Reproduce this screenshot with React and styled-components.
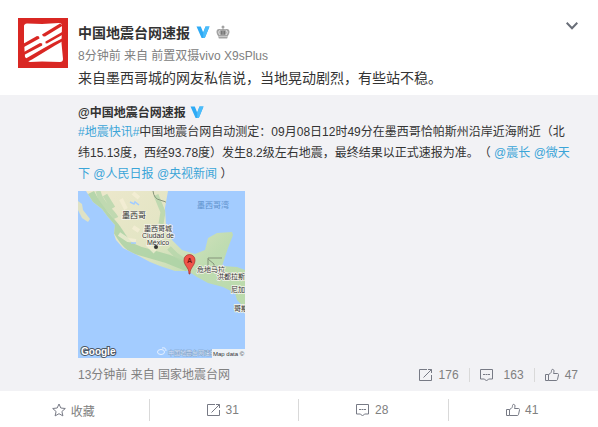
import React from 'react';
import styled, { createGlobalStyle } from 'styled-components';

const GlobalStyle = createGlobalStyle`
  * {
    box-sizing: border-box;
  }

  body {
    margin: 0;
    background: #fff;
    color: #333;
    font-family: 'Liberation Sans', 'Noto Sans CJK SC', sans-serif;
    font-size: 12px;
    text-spacing-trim: space-all;
  }
`;

const Card = styled.article`
  width: 100%;
  padding-top: 18px;
`;

const Header = styled.header`
  display: flex;
  gap: 10px;
  padding: 0 20px 7px 18px;
`;

const Avatar = styled.svg`
  flex: none;
  width: 50px;
  height: 50px;
`;

const HeaderBody = styled.div`
  flex: 1;
  min-width: 0;
`;

const NameRow = styled.div`
  display: flex;
  align-items: center;
  gap: ${({ $small }) => ($small ? '4px' : '6px')};
  height: ${({ $small }) => ($small ? '21px' : '28px')};
`;

const Name = styled.a`
  color: #333;
  font-size: ${({ $small }) => ($small ? '12px' : '14px')};
  font-weight: bold;
  text-decoration: none;
`;

const Meta = styled.p`
  margin: 0;
  color: #808080;
  line-height: 20px;
`;

const MetaLink = styled.a`
  color: #808080;
  text-decoration: none;
`;

const PostText = styled.p`
  margin: 2px 0 0;
  font-size: 14px;
  line-height: 20px;
`;

const MenuButton = styled.button`
  display: flex;
  align-self: flex-start;
  padding: 4px 0;
  border: 0;
  background: none;
  color: #696e78;
  cursor: pointer;
`;

const Repost = styled.section`
  padding: 6px 20px 0 78px;
  background: #f2f2f5;
`;

const RepostText = styled.p`
  margin: 0 4px 6px 0;
  line-height: 21px;
`;

const Mention = styled.a`
  color: #3ba5d8;
  text-decoration: none;
`;

const MapImage = styled.svg`
  display: block;
  width: 167px;
  height: 167px;
`;

const RepostFooter = styled.footer`
  display: flex;
  align-items: center;
  justify-content: space-between;
  height: 33px;
`;

const Stats = styled.div`
  display: flex;
  align-items: center;
`;

const Stat = styled.button`
  display: flex;
  align-items: center;
  gap: ${({ $wide }) => ($wide ? '10px' : '6px')};
  padding: 0 10px;
  border: 0;
  background: none;
  color: #808080;
  font: inherit;
  line-height: 14px;
  cursor: pointer;

  &:last-child {
    padding-right: 0;
  }

  & + & {
    border-left: 1px solid #d9d9d9;
  }
`;

const Actions = styled.nav`
  display: grid;
  grid-template-columns: repeat(4, 1fr);
  padding: 8px 0 6px;
`;

const Action = styled.button`
  display: flex;
  align-items: center;
  justify-content: center;
  gap: 5px;
  height: 22px;
  padding: 0 2px 0 0;
  border: 0;
  border-right: 1px solid #d9d9d9;
  background: none;
  color: #808080;
  font: inherit;
  cursor: pointer;

  &:last-child {
    border-right: 0;
  }
`;

const Icon = styled.svg`
  flex: none;
  width: 14px;
  height: 14px;
  fill: none;
  stroke: #777a85;
  stroke-width: 1;
`;

const ShareIcon = () => (
  <Icon viewBox="0 0 14 14">
    <path d="M8 1.500H.5v11h12V7M4.500 9.500l8-8M9 1.500h3.500V5" />
  </Icon>
);

const CommentIcon = () => (
  <Icon viewBox="0 0 14 14">
    <path d="M.5 1.500h12v9.500H8.500l-2 2-2-2H.5z" />
    <path d="M3 6.500h2M5.500 6.500h2M8 6.500h2" />
  </Icon>
);

const LikeIcon = () => (
  <Icon viewBox="0 0 14 14">
    <path d="M.5 6.500h3v6h-3zM3.500 6.500C6 5.500 6.500 4 6.500 2.500 6.500 1 9 .8 9 3c0 1-.3 1.700-.5 2.500h4c1 0 1.200.8 1 1.500l-1 4.500c-.2.700-.5 1-1.200 1H3.500" />
  </Icon>
);

const StarIcon = () => (
  <Icon viewBox="0 0 14 14">
    <path d="M7 1l1.800 4 4.500.5-3.400 3 1 4.400L7 10.700 3.100 12.900l1-4.400-3.400-3L5.200 5z" strokeLinejoin="round" />
  </Icon>
);

const VerifiedIcon = () => (
  <svg width="14" height="14" viewBox="0 0 14 14" role="img" aria-label="认证">
    <path d="M.5 1.500h4.300l2.400 6 2.300-6h4L8.800 13H5.600z" fill="#2eaaf5" />
    <path d="M9.500 1.500h4L8.800 13H7.200V7.500z" fill="#4bbcfa" />
  </svg>
);

const CrownIcon = () => (
  <svg width="14" height="14" viewBox="0 0 14 14" fill="#a3a3a3">
    <circle cx="7" cy="2" r="1.500" />
    <path d="M2.500 11.500C-.5 8 0 4 3 4c1.500 0 2.500.5 4-.5 1.500 1 2.500.5 4 .5 3 0 3.500 4 .5 7.500z" />
    <rect x="2.500" y="11" width="9" height="2.500" rx=".7" />
    <path d="M4.200 5.500c-2 .2-1.800 3 0 4.500M9.800 5.500c2 .2 1.800 3 0 4.500" fill="none" stroke="#ececec" />
    <path d="M5 6h1.500v3.500H5zM7.500 6H9v3.500H7.500z" fill="#777" />
    <path d="M3 11.500h8" stroke="#e0e0e0" strokeWidth=".6" />
  </svg>
);

const AvatarLogo = () => (
  <Avatar viewBox="0 0 50 50">
    <rect width="50" height="50" fill="#d92723" />
    <path d="M6 8q0-2 3-2.500l15 .5 17-1q3 0 3 3l-.5 17L45 41q0 3-3 3l-18-.5-12 .5q-2 0-2-2l-3-3-1-15z" fill="#fff" />
    <g fill="#d92723">
      <path d="M4 26.500l15-8.500 2 .5.500 2L6 29l-2 1z" />
      <path d="M24 16.500L42 5.500l3 2-18 11-2-.2z" />
      <path d="M5 34.500l17-9.500 2.200.5v2L7 36.500l-2 .8z" />
      <path d="M27.500 23.500L45 13.500v3l-16 9-1.500-.3z" />
      <path d="M7 41l19-11 10-5.500 9-4.500v3L37 27.500 14 41.500 9 44l-4 1z" />
    </g>
  </Avatar>
);

// Места на карте: подпись и точка привязки
const places = [
  { name: '墨西哥', x: 56, y: 27, size: 8 },
  { name: '墨西哥城', x: 80, y: 40, size: 7 },
  { name: 'Ciudad de', x: 80, y: 47, size: 7 },
  { name: 'México', x: 80, y: 54, size: 7 },
  { name: '危地马拉', x: 133, y: 81, size: 7 },
  { name: '洪都拉斯', x: 153, y: 88, size: 7 },
  { name: '尼加', x: 160, y: 101, size: 7 },
  { name: '哥斯', x: 163, y: 120, size: 7 },
];

const EarthquakeMap = () => (
  <MapImage viewBox="0 0 167 167" role="img" aria-label="墨西哥">
    <defs>
      <linearGradient id="land" x1="0" y1="0" x2="1" y2="1">
        <stop offset="0" stopColor="#eee8cd" />
        <stop offset=".35" stopColor="#e3e5c4" />
        <stop offset=".6" stopColor="#bfdcb1" />
        <stop offset="1" stopColor="#b8d9aa" />
      </linearGradient>
      <clipPath id="coast">
        <path d="M8 0L15 11 24 18 30 26 37 34 36 43 38 49 45 57 59 64 72 71 82 75 97 80 110 80 119 86 130 92 145 96 157 102 159 109 164 114 167 117V79L159 76 144 75 147 66 150 57 155 44 154 41 139 42 130 47 127 59 117 63 104 59 94 49 88 34 87 17 90 0z" />
      </clipPath>
    </defs>
    <rect width="167" height="167" fill="#a3ccff" />
    <path d="M0 10l4 3 1 6 7 9-2 3-6-4-4-8z" fill="#dfe2c5" />
    <g clipPath="url(#coast)">
      <rect width="167" height="167" fill="url(#land)" />
      <path d="M12 2c8 17 18 25 25 34s10 20 25 24l28 8 20 8" fill="none" stroke="#a9d1a3" strokeWidth="9" opacity=".8" />
      <path d="M20 0c3 14 14 19 18 27M27 4l8 13M78 4l7 17-2 12M91 57l7 7 7 5" fill="none" stroke="#b5d6aa" strokeWidth="5" opacity=".8" />
      <path d="M43 8l5 10M55 2l6 5M55 36l6 4M41 43l9 6 8 1M69 53l8 8" fill="none" stroke="#f7f0d7" strokeWidth="4" opacity=".7" />
      <path d="M52 11l4 2 1-2 4 3M53 52h5" fill="none" stroke="#a3ccff" strokeWidth="1.500" />
      <path d="M75 0q1 8 7 9t9 5M126 82l4-8v-7h14M130 68l6 5v7" fill="none" stroke="#85947b" strokeWidth="1" />
    </g>
    {places.map((place) => (
      <text
        key={place.name}
        x={place.x}
        y={place.y}
        fontSize={place.size}
        textAnchor="middle"
        fill="#333"
        stroke="#f4f4ea"
        strokeWidth="1.500"
        paintOrder="stroke"
      >
        {place.name}
      </text>
    ))}
    <text x="135" y="17" fontSize="8" textAnchor="middle" fill="#5e91cc">墨西哥湾</text>
    <circle cx="78" cy="56" r="2" fill="#333" />
    <path d="M111 83c0-7-5-8-5-14a5.500 5.500 0 0 1 11 0c0 6-5 7-5 14z" fill="#f0544a" stroke="#a8312b" strokeWidth=".7" />
    <text x="111.500" y="72" fontSize="7" fontWeight="bold" textAnchor="middle" fill="#701510">A</text>
    <text x="3" y="164" fontSize="10" fontWeight="bold" fill="#fff" stroke="#4d5965" strokeWidth="2" paintOrder="stroke">Google</text>
    <g fill="none" stroke="#e6f1ff">
      <ellipse cx="83" cy="161" rx="3.500" ry="2.500" />
      <path d="M84 157q4-1 4 3" />
    </g>
    <text x="90" y="164" fontSize="6" fill="#dceaff" stroke="#7897bc" strokeWidth=".6" paintOrder="stroke">中国地震台网速报</text>
    <rect x="134" y="158" width="33" height="9" fill="#edf2f6" />
    <text x="135" y="165" fontSize="6" fill="#333">Map data ©</text>
  </MapImage>
);

const App = () => {
  return (
    <>
      <GlobalStyle />
      <Card>
        <Header>
          <AvatarLogo />
          <HeaderBody>
            <NameRow>
              <Name href="#user">中国地震台网速报</Name>
              <VerifiedIcon />
              <CrownIcon />
            </NameRow>
            <Meta>
              8分钟前 来自 <MetaLink href="#device">前置双摄vivo X9sPlus</MetaLink>
            </Meta>
            <PostText>来自墨西哥城的网友私信说，当地晃动剧烈，有些站不稳。</PostText>
          </HeaderBody>
          <MenuButton aria-label="更多">
            <svg width="12" height="8" viewBox="0 0 12 8" fill="none" stroke="currentColor" strokeWidth="2">
              <path d="M.7 .8L6 6.200 11.300 .8" />
            </svg>
          </MenuButton>
        </Header>
        <Repost>
          <NameRow $small>
            <Name $small href="#user">@中国地震台网速报</Name>
            <VerifiedIcon />
          </NameRow>
          <RepostText>
            <Mention href="#topic">#地震快讯#</Mention>
            中国地震台网自动测定：09月08日12时49分在墨西哥恰帕斯州沿岸近海附近（北纬15.13度，西经93.78度）发生8.2级左右地震，最终结果以正式速报为准。（{' '}
            <Mention href="#zhenzhang">@震长</Mention> <Mention href="#weitianxia">@微天下</Mention>{' '}
            <Mention href="#people">@人民日报</Mention> <Mention href="#cctv">@央视新闻</Mention> ）
          </RepostText>
          <EarthquakeMap />
          <RepostFooter>
            <Meta>
              13分钟前 来自 <MetaLink href="#source">国家地震台网</MetaLink>
            </Meta>
            <Stats>
              <Stat aria-label="转发 176"><ShareIcon />176</Stat>
              <Stat $wide aria-label="评论 163"><CommentIcon />163</Stat>
              <Stat aria-label="赞 47"><LikeIcon />47</Stat>
            </Stats>
          </RepostFooter>
        </Repost>
        <Actions>
          <Action><StarIcon />收藏</Action>
          <Action aria-label="转发 31"><ShareIcon />31</Action>
          <Action aria-label="评论 28"><CommentIcon />28</Action>
          <Action aria-label="赞 41"><LikeIcon />41</Action>
        </Actions>
      </Card>
    </>
  );
};

export default App;
